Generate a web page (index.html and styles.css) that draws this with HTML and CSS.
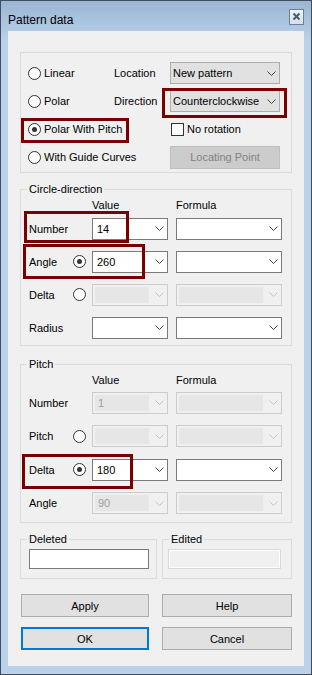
FILE: index.html
```html
<!DOCTYPE html>
<html lang="en">
<head>
    <meta charset="UTF-8">
    <meta name="viewport" content="width=device-width, initial-scale=1.0">
    <link rel="stylesheet" href="styles.css">
</head>
<body>
    <div class="window">
        <div class="titlebar">
            <span class="title">Pattern data</span>
            <div class="close-btn">
                <svg width="13" height="13" viewBox="0 0 13 13">
                    <path d="M3.5 3.5 L9.5 9.5 M9.5 3.5 L3.5 9.5" stroke="#4b5b70" stroke-width="2" fill="none"/>
                </svg>
            </div>
        </div>

        <div class="client">
            <div class="type-group">
                <label class="radio-item"><span class="radio"></span>Linear</label>
                <span class="field-label">Location</span>
                <div class="combo button-combo">
                    <span class="combo-text">New pattern</span>
                    <svg class="chev" width="9" height="5" viewBox="0 0 9 5"><polyline points="0.5,0.5 4.5,4.5 8.5,0.5"/></svg>
                </div>

                <label class="radio-item"><span class="radio"></span>Polar</label>
                <span class="field-label">Direction</span>
                <div class="combo button-combo">
                    <span class="combo-text">Counterclockwise</span>
                    <svg class="chev" width="9" height="5" viewBox="0 0 9 5"><polyline points="0.5,0.5 4.5,4.5 8.5,0.5"/></svg>
                </div>

                <label class="radio-item"><span class="radio checked"></span>Polar With Pitch</label>
                <span></span>
                <label class="check-item"><span class="checkbox"></span>No rotation</label>

                <label class="radio-item"><span class="radio"></span>With Guide Curves</label>
                <span></span>
                <div class="button disabled">Locating Point</div>
            </div>

            <fieldset class="group circle-group">
                <legend>Circle-direction</legend>
                <div class="param-grid">
                    <span></span><span></span>
                    <span class="col-head">Value</span>
                    <span class="col-head formula">Formula</span>

                    <span class="param-label">Number</span><span></span>
                    <div class="combo"><span class="combo-text">14</span><svg class="chev" width="9" height="5" viewBox="0 0 9 5"><polyline points="0.5,0.5 4.5,4.5 8.5,0.5"/></svg></div>
                    <div class="combo formula"><span class="combo-text"></span><svg class="chev" width="9" height="5" viewBox="0 0 9 5"><polyline points="0.5,0.5 4.5,4.5 8.5,0.5"/></svg></div>

                    <span class="param-label">Angle</span><span class="radio checked"></span>
                    <div class="combo"><span class="combo-text">260</span><svg class="chev" width="9" height="5" viewBox="0 0 9 5"><polyline points="0.5,0.5 4.5,4.5 8.5,0.5"/></svg></div>
                    <div class="combo formula"><span class="combo-text"></span><svg class="chev" width="9" height="5" viewBox="0 0 9 5"><polyline points="0.5,0.5 4.5,4.5 8.5,0.5"/></svg></div>

                    <span class="param-label">Delta</span><span class="radio"></span>
                    <div class="combo disabled"><span class="combo-text"></span><svg class="chev" width="9" height="5" viewBox="0 0 9 5"><polyline points="0.5,0.5 4.5,4.5 8.5,0.5"/></svg></div>
                    <div class="combo formula disabled"><span class="combo-text"></span><svg class="chev" width="9" height="5" viewBox="0 0 9 5"><polyline points="0.5,0.5 4.5,4.5 8.5,0.5"/></svg></div>

                    <span class="param-label">Radius</span><span></span>
                    <div class="combo"><span class="combo-text"></span><svg class="chev" width="9" height="5" viewBox="0 0 9 5"><polyline points="0.5,0.5 4.5,4.5 8.5,0.5"/></svg></div>
                    <div class="combo formula"><span class="combo-text"></span><svg class="chev" width="9" height="5" viewBox="0 0 9 5"><polyline points="0.5,0.5 4.5,4.5 8.5,0.5"/></svg></div>
                </div>
            </fieldset>

            <fieldset class="group pitch-group">
                <legend>Pitch</legend>
                <div class="param-grid pitch-grid">
                    <span></span><span></span>
                    <span class="col-head">Value</span>
                    <span class="col-head formula">Formula</span>

                    <span class="param-label">Number</span><span></span>
                    <div class="combo disabled"><span class="combo-text">1</span><svg class="chev" width="9" height="5" viewBox="0 0 9 5"><polyline points="0.5,0.5 4.5,4.5 8.5,0.5"/></svg></div>
                    <div class="combo formula disabled"><span class="combo-text"></span><svg class="chev" width="9" height="5" viewBox="0 0 9 5"><polyline points="0.5,0.5 4.5,4.5 8.5,0.5"/></svg></div>

                    <span class="param-label">Pitch</span><span class="radio"></span>
                    <div class="combo disabled"><span class="combo-text"></span><svg class="chev" width="9" height="5" viewBox="0 0 9 5"><polyline points="0.5,0.5 4.5,4.5 8.5,0.5"/></svg></div>
                    <div class="combo formula disabled"><span class="combo-text"></span><svg class="chev" width="9" height="5" viewBox="0 0 9 5"><polyline points="0.5,0.5 4.5,4.5 8.5,0.5"/></svg></div>

                    <span class="param-label">Delta</span><span class="radio checked"></span>
                    <div class="combo"><span class="combo-text">180</span><svg class="chev" width="9" height="5" viewBox="0 0 9 5"><polyline points="0.5,0.5 4.5,4.5 8.5,0.5"/></svg></div>
                    <div class="combo formula"><span class="combo-text"></span><svg class="chev" width="9" height="5" viewBox="0 0 9 5"><polyline points="0.5,0.5 4.5,4.5 8.5,0.5"/></svg></div>

                    <span class="param-label">Angle</span><span></span>
                    <div class="combo disabled"><span class="combo-text">90</span><svg class="chev" width="9" height="5" viewBox="0 0 9 5"><polyline points="0.5,0.5 4.5,4.5 8.5,0.5"/></svg></div>
                    <div class="combo formula disabled"><span class="combo-text"></span><svg class="chev" width="9" height="5" viewBox="0 0 9 5"><polyline points="0.5,0.5 4.5,4.5 8.5,0.5"/></svg></div>
                </div>
            </fieldset>

            <div class="bottom-groups">
                <fieldset class="group small-group deleted-group">
                    <legend>Deleted</legend>
                    <div class="edit-box"></div>
                </fieldset>
                <fieldset class="group small-group edited-group">
                    <legend>Edited</legend>
                    <div class="edit-box disabled"></div>
                </fieldset>
            </div>

            <div class="button-grid">
                <div class="button">Apply</div>
                <div class="button">Help</div>
                <div class="button default">OK</div>
                <div class="button">Cancel</div>
            </div>

            <!-- annotation boxes -->
            <div class="highlight hl-direction"></div>
            <div class="highlight hl-pitch-mode"></div>
            <div class="highlight hl-number"></div>
            <div class="highlight hl-angle"></div>
            <div class="highlight hl-delta"></div>
        </div>
    </div>
</body>
</html>
```

FILE: styles.css
```css
body {
    margin: 0;
    font-family: "Liberation Sans", Arial, sans-serif;
    font-size: 11px;
    color: #000;
    background-color: #b9d1ea;
}
.window {
    width: 312px;
    height: 675px;
    box-sizing: border-box;
    border: 1px solid #3f4d5e;
    padding: 0 7px 8px 7px;
    background: linear-gradient(#9bb5d2, #b9d1ea 40px);
    display: flex;
    flex-direction: column;
}
.titlebar {
    height: 30px;
    flex-shrink: 0;
    display: flex;
    justify-content: space-between;
    align-items: center;
}
.title {
    font-size: 12px;
    padding-top: 7px;
}
.close-btn {
    width: 15px;
    height: 16px;
    box-sizing: border-box;
    border: 1px solid #6f8096;
    background: linear-gradient(#f0f4f9, #d6e0ec);
    display: flex;
    align-items: center;
    justify-content: center;
    margin-top: 1px;
}
.client {
    position: relative;
    flex: 1;
    background-color: #f0f0f0;
    padding: 21px 12px 0 12px;
}

/* top block */
.type-group {
    border: 1px solid #dcdcdc;
    padding: 6px 0 1px 7px;
    display: grid;
    grid-template-columns: 86px 56px 110px;
    grid-auto-rows: 28px;
    align-items: center;
}
.radio-item, .check-item {
    display: flex;
    align-items: center;
    gap: 3px;
    white-space: nowrap;
}
.check-item {
    padding-left: 1px;
}
.radio {
    flex-shrink: 0;
    width: 13px;
    height: 13px;
    box-sizing: border-box;
    border: 1px solid #333;
    border-radius: 50%;
    background-color: #fff;
    display: flex;
    align-items: center;
    justify-content: center;
}
.radio.checked::after {
    content: "";
    width: 5px;
    height: 5px;
    border-radius: 50%;
    background-color: #333;
}
.checkbox {
    flex-shrink: 0;
    width: 13px;
    height: 13px;
    box-sizing: border-box;
    border: 1px solid #333;
    background-color: #fff;
}
.field-label {
    white-space: nowrap;
}

/* combos */
.combo {
    height: 22px;
    box-sizing: border-box;
    border: 1px solid #7a7a7a;
    background-color: #fff;
    display: flex;
    align-items: center;
    padding: 0 3px 0 4px;
}
.combo-text {
    flex: 1;
    white-space: nowrap;
    overflow: hidden;
}
.chev {
    flex-shrink: 0;
    fill: none;
    stroke: #444;
    stroke-width: 1;
}
.button-combo {
    background-color: #e1e1e1;
    border-color: #adadad;
    padding-left: 2px;
}
.combo.disabled {
    border-color: #cccccc;
    background-color: #f0f0f0;
    padding: 2px 3px 2px 2px;
    color: #a0a0a0;
    gap: 6px;
}
.combo.disabled .combo-text {
    align-self: stretch;
    background-color: #e6e6e6;
    padding-left: 3px;
    line-height: 16px;
}
.combo.disabled .chev {
    stroke: #c4c4c4;
}

/* buttons */
.button {
    height: 23px;
    box-sizing: border-box;
    border: 1px solid #adadad;
    background-color: #e1e1e1;
    display: flex;
    align-items: center;
    justify-content: center;
}
.button.disabled {
    background-color: #cccccc;
    border-color: #bfbfbf;
    color: #838383;
}
.button.default {
    border: 2px solid #0078d7;
}

/* group boxes */
.group {
    margin: 0;
    border: 1px solid #dcdcdc;
    min-inline-size: 0;
}
.group legend {
    padding: 0 2px;
    line-height: 14px;
}
.circle-group {
    margin-top: 9px;
    padding: 1px 9px 1px 6px;
}
.pitch-group {
    margin-top: 11px;
    padding: 3px 9px 2px 6px;
}
.param-grid {
    display: grid;
    grid-template-columns: 46px 19px 76px 114px;
    grid-template-rows: 15px repeat(4, 33px);
    align-items: center;
}
.pitch-grid {
    grid-template-rows: 12px repeat(4, 33.5px);
}
.param-grid .formula {
    margin-left: 8px;
}
.param-label {
    padding-left: 2px;
}

/* deleted / edited */
.bottom-groups {
    display: flex;
    gap: 5px;
    margin-top: 9px;
}
.small-group {
    padding: 3px 6px 9px 6px;
}
.deleted-group {
    width: 137px;
    box-sizing: border-box;
}
.edited-group {
    width: 130px;
    box-sizing: border-box;
}
.edit-box {
    height: 20px;
    box-sizing: border-box;
    border: 1px solid #7a7a7a;
    background-color: #fff;
    width: 120px;
    margin-left: 2px;
}
.edit-box.disabled {
    width: 113px;
    margin-left: -1px;
    border-color: #d9d9d9;
    background-color: #f0f0f0;
    box-shadow: inset 0 0 0 1px #fff;
}

.button-grid {
    display: grid;
    grid-template-columns: 128px 130px;
    column-gap: 13px;
    row-gap: 10px;
    margin: 15px 0 0 1px;
}

/* red annotation frames over the dialog */
.highlight {
    position: absolute;
    box-sizing: border-box;
    border: 3px solid #7a0000;
}
.hl-direction { left: 154px; top: 57px; width: 125px; height: 30px; }
.hl-pitch-mode { left: 13px; top: 87px; width: 108px; height: 25px; }
.hl-number { left: 16px; top: 180px; width: 105px; height: 32px; }
.hl-angle { left: 15px; top: 213px; width: 122px; height: 35px; }
.hl-delta { left: 14px; top: 423px; width: 111px; height: 35px; }
```
